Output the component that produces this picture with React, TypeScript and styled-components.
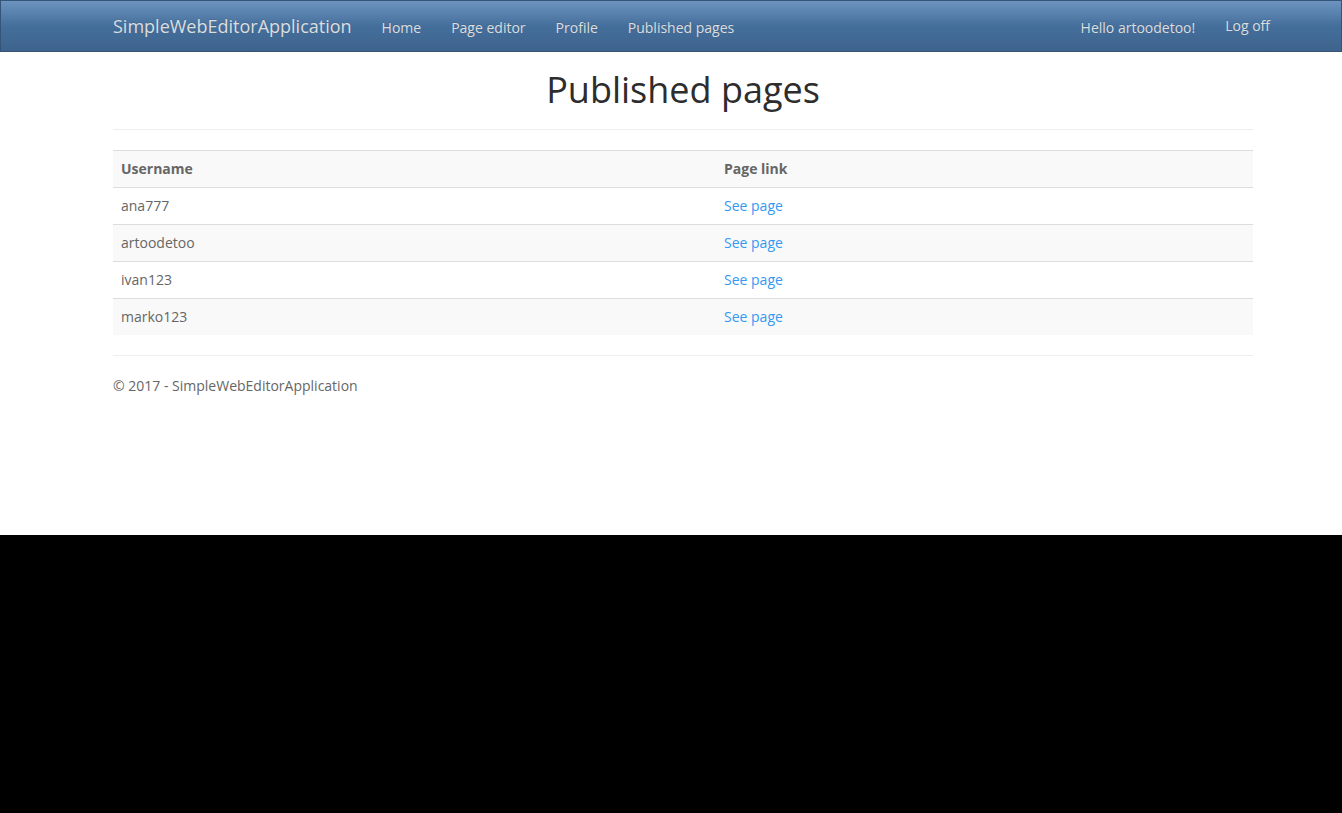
import React from "react";
import styled, { createGlobalStyle } from "styled-components";

const GlobalStyle = createGlobalStyle`
  html { background: #000; }
  body {
    margin: 0;
    font-family: "Open Sans", "Liberation Sans", Arial, sans-serif;
    font-size: 14px;
    line-height: 1.428571;
    color: #666666;
  }
  * { box-sizing: border-box; }
`;

const Page = styled.div`
  background: #ffffff;
  min-height: 535px;
`;

const Navbar = styled.nav`
  height: 52px;
  border: 1px solid #345578;
  background-image: linear-gradient(#6d94bf, #446e9b 50%, #3e648d);
  padding-left: 24px;
`;

const Container = styled.div`
  width: 1140px;
  margin: 0 auto;
  display: flex;
  flex-direction: ${(p: { $column?: boolean }) => (p.$column ? "column" : "row")};
`;

const NavContainer = styled(Container)`
  align-items: flex-start;
  height: 50px;
`;

const Brand = styled.a`
  font-size: 18px;
  line-height: 20px;
  padding: 15px 15px;
  margin-left: -15px;
  color: #dddddd;
  text-decoration: none;
  text-shadow: 0 -1px 0 rgba(0, 0, 0, 0.1);
`;

const NavList = styled.ul<{ $right?: boolean }>`
  list-style: none;
  margin: 0;
  padding: 0;
  display: flex;
  margin-left: ${(p) => (p.$right ? "auto" : "0")};
  margin-right: ${(p) => (p.$right ? "-32px" : "0")};
`;

const NavItem = styled.li``;

const NavLink = styled.a<{ $raised?: boolean }>`
  display: block;
  padding: ${(p) => (p.$raised ? "15px 15px 15px" : "17px 15px 13px")};
  line-height: 20px;
  font-size: 14px;
  color: #dddddd;
  text-decoration: none;
  text-shadow: 0 -1px 0 rgba(0, 0, 0, 0.1);
`;

const Body = styled.main`
  padding-left: 24px;
`;

const Title = styled.h1`
  margin: 18px 0 0;
  font-size: 36px;
  font-weight: 400;
  line-height: 39px;
  text-align: center;
  color: #2d2d2d;
`;

const Rule = styled.hr`
  width: 100%;
  margin: 20px 0;
  border: 0;
  border-top: 1px solid #eeeeee;
  height: 0;
`;

const Table = styled.div`
  display: grid;
  grid-template-columns: 603px 1fr;
  width: 100%;
`;

const Row = styled.div<{ $striped?: boolean }>`
  display: contents;
  & > * {
    background: ${(p) => (p.$striped ? "#f9f9f9" : "#ffffff")};
  }
`;

const Cell = styled.div<{ $head?: boolean }>`
  padding: 8px;
  line-height: 20px;
  border-top: 1px solid #dddddd;
  font-weight: ${(p) => (p.$head ? 700 : 400)};
  color: #666666;
`;

const Link = styled.a`
  color: #3399f3;
  text-decoration: none;
`;

const FooterText = styled.p`
  margin: 0 0 10px;
  line-height: 20px;
`;

const rows = ["ana777", "artoodetoo", "ivan123", "marko123"];

export default function App() {
  return (
    <Page>
      <GlobalStyle />
      <Navbar>
        <NavContainer>
          <Brand href="#">SimpleWebEditorApplication</Brand>
          <NavList>
            {["Home", "Page editor", "Profile", "Published pages"].map((t) => (
              <NavItem key={t}>
                <NavLink href="#">{t}</NavLink>
              </NavItem>
            ))}
          </NavList>
          <NavList $right>
            <NavItem>
              <NavLink href="#">Hello artoodetoo!</NavLink>
            </NavItem>
            <NavItem>
              <NavLink href="#" $raised>
                Log off
              </NavLink>
            </NavItem>
          </NavList>
        </NavContainer>
      </Navbar>
      <Body>
        <Container $column>
          <Title>Published pages</Title>
          <Rule />
          <Table>
            <Row $striped>
              <Cell $head>Username</Cell>
              <Cell $head>Page link</Cell>
            </Row>
            {rows.map((u, i) => (
              <Row key={u} $striped={i % 2 === 1}>
                <Cell>{u}</Cell>
                <Cell>
                  <Link href="#">See page</Link>
                </Cell>
              </Row>
            ))}
          </Table>
          <Rule />
          <FooterText>© 2017 - SimpleWebEditorApplication</FooterText>
        </Container>
      </Body>
    </Page>
  );
}
